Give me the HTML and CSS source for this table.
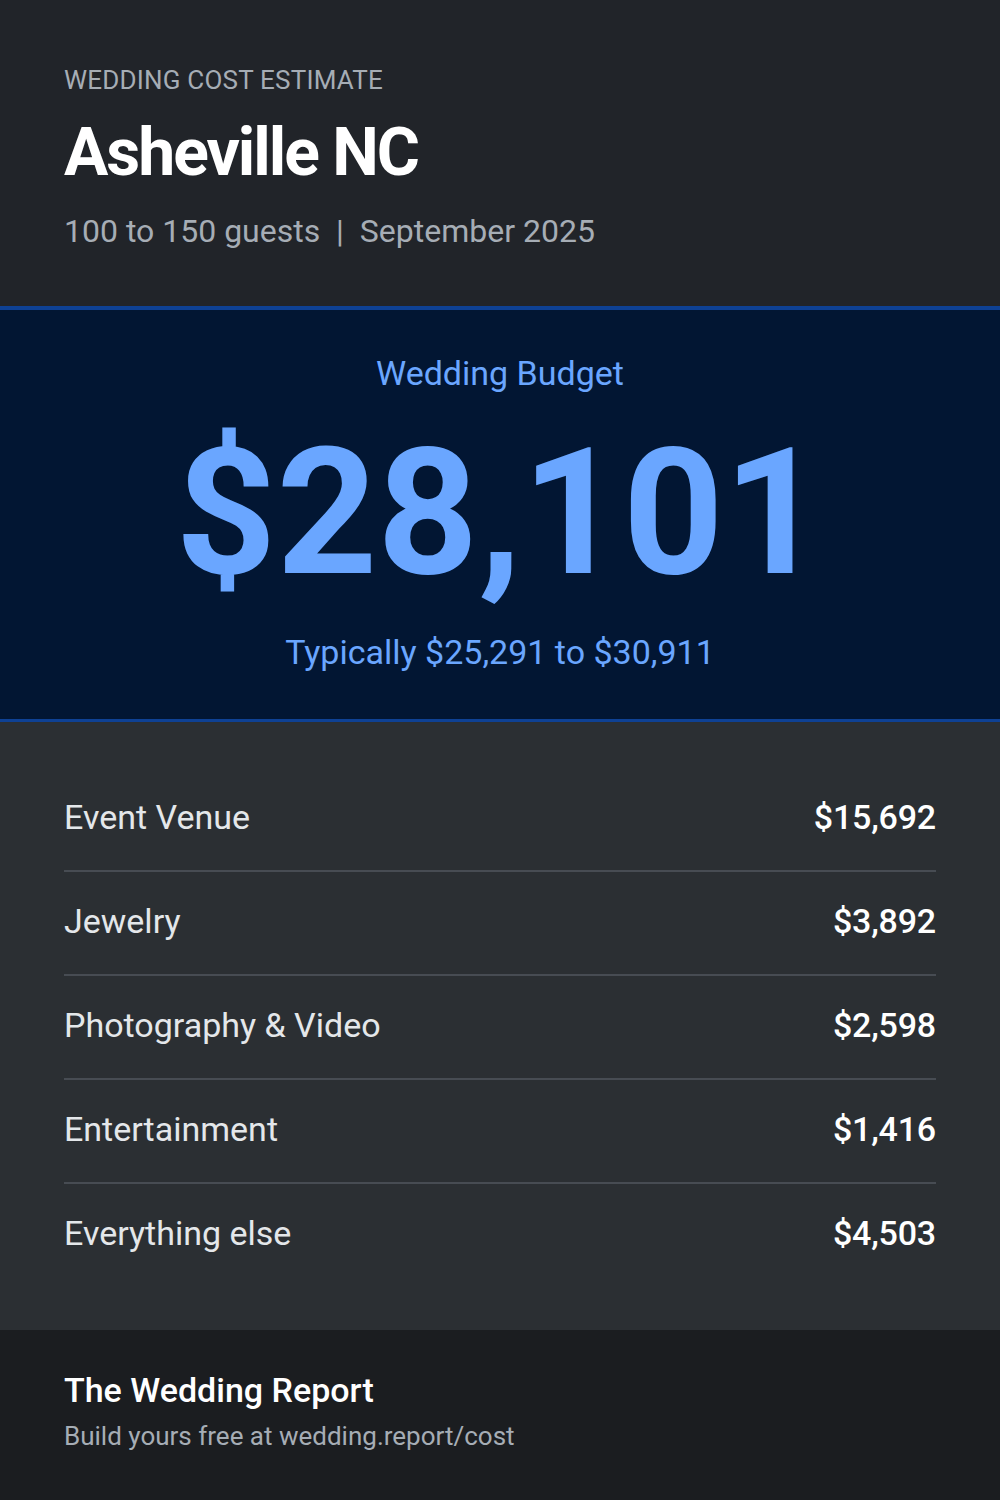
FILE: index.html
```html
<!DOCTYPE html>
<html lang="en">
<head>
    <meta charset="UTF-8">
    <meta name="viewport" content="width=device-width, initial-scale=1.0">
    <title>Wedding Cost Estimate</title>
    <link rel="stylesheet" href="styles.css">
</head>
<body>

<div class="card">
    <div class="header">
        <div class="eyebrow">WEDDING COST ESTIMATE</div>
        <h1>Asheville NC</h1>
        <div class="meta">100 to 150 guests &nbsp;|&nbsp; September 2025</div>
    </div>

    <div class="budget">
        <div class="budget-label">Wedding Budget</div>
        <div class="budget-total">$28,101</div>
        <div class="budget-range">Typically $25,291 to $30,911</div>
    </div>

    <div class="items">
        <div class="item">
            <span class="item-name">Event Venue</span>
            <span class="item-cost">$15,692</span>
        </div>
        <div class="item">
            <span class="item-name">Jewelry</span>
            <span class="item-cost">$3,892</span>
        </div>
        <div class="item">
            <span class="item-name">Photography &amp; Video</span>
            <span class="item-cost">$2,598</span>
        </div>
        <div class="item">
            <span class="item-name">Entertainment</span>
            <span class="item-cost">$1,416</span>
        </div>
        <div class="item">
            <span class="item-name">Everything else</span>
            <span class="item-cost">$4,503</span>
        </div>
    </div>

    <div class="footer">
        <div class="brand">The Wedding Report</div>
        <div class="cta">Build yours free at wedding.report/cost</div>
    </div>
</div>

</body>
</html>
```

FILE: styles.css
```css
body {
    margin: 0;
    font-family: Roboto, "Liberation Sans", Arial, sans-serif;
    background-color: #1b1d20;
}
.card {
    width: 1000px;
    height: 1500px;
    display: flex;
    flex-direction: column;
}
.header {
    background-color: #212429;
    padding: 62px 64px 53px;
    border-bottom: 4px solid #0e4194;
}
.eyebrow {
    font-size: 26px;
    line-height: 36px;
    letter-spacing: 0.2px;
    color: #a6adb5;
}
h1 {
    margin: 17px 0 0;
    font-size: 66px;
    font-weight: 700;
    line-height: 76px;
    letter-spacing: -2px;
    color: #ffffff;
}
.meta {
    margin-top: 18px;
    font-size: 32px;
    line-height: 44px;
    color: #a6adb5;
}
.budget {
    background-color: #021633;
    border-bottom: 3px solid #0e4194;
    text-align: center;
    padding: 41px 0 45px;
    color: #6aa6ff;
}
.budget-label {
    font-size: 34px;
    line-height: 44px;
}
.budget-total {
    margin-top: 18px;
    font-size: 176px;
    font-weight: 700;
    line-height: 200px;
}
.budget-range {
    margin-top: 17px;
    font-size: 34px;
    line-height: 44px;
}
.items {
    background-color: #2b2f33;
    padding: 46px 64px 44px;
    flex: 1;
}
.item {
    display: flex;
    justify-content: space-between;
    align-items: center;
    height: 102px;
    box-sizing: content-box;
    padding-bottom: 0;
    border-bottom: 2px solid #474c53;
    font-size: 34px;
}
.item span {
    margin-bottom: 4px;
}
.item:last-child {
    border-bottom: none;
}
.item-name {
    color: #e4e7ea;
}
.item-cost {
    color: #ffffff;
    font-weight: 500;
    letter-spacing: -0.2px;
}
.footer {
    background-color: #1b1d20;
    padding: 38px 64px 0;
    height: 170px;
    box-sizing: border-box;
}
.brand {
    font-size: 34px;
    font-weight: 500;
    line-height: 44px;
    color: #ffffff;
}
.cta {
    margin-top: 6px;
    font-size: 26px;
    line-height: 36px;
    color: #a6adb5;
}
```
